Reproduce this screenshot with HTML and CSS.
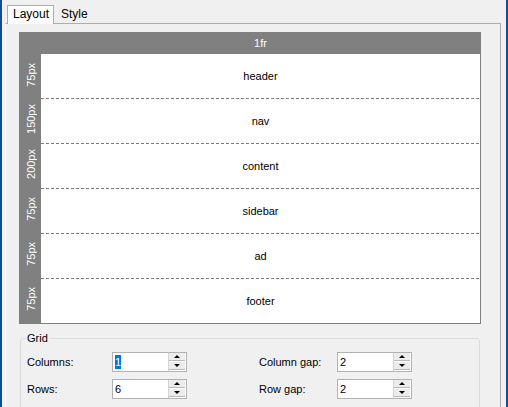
FILE: index.html
```html
<!DOCTYPE html>
<html lang="en">
<head>
    <meta charset="UTF-8">
    <title>Grid layout editor</title>
    <link rel="stylesheet" href="styles.css">
</head>
<body>
    <div class="window">
        <!-- tabs -->
        <div class="tabs">
            <div class="tab active">Layout</div>
            <div class="tab">Style</div>
        </div>
        <div class="page">
            <!-- grid preview -->
            <div class="preview">
                <div class="head"><span class="col">1fr</span></div>
                <div class="row"><div class="size"><span>75px</span></div><div class="cell">header</div></div>
                <div class="row"><div class="size"><span>150px</span></div><div class="cell">nav</div></div>
                <div class="row"><div class="size"><span>200px</span></div><div class="cell">content</div></div>
                <div class="row"><div class="size"><span>75px</span></div><div class="cell">sidebar</div></div>
                <div class="row"><div class="size"><span>75px</span></div><div class="cell">ad</div></div>
                <div class="row"><div class="size"><span>75px</span></div><div class="cell">footer</div></div>
            </div>
            <!-- grid settings -->
            <fieldset class="group">
                <legend>Grid</legend>
                <div class="fields">
                    <label>Columns:</label>
                    <div class="spin"><div class="val"><span class="sel">1</span></div><div class="arrows"><div class="btn"><i class="up"></i></div><div class="btn"><i class="down"></i></div></div></div>
                    <label>Column gap:</label>
                    <div class="spin"><div class="val">2</div><div class="arrows"><div class="btn"><i class="up"></i></div><div class="btn"><i class="down"></i></div></div></div>
                    <label>Rows:</label>
                    <div class="spin"><div class="val">6</div><div class="arrows"><div class="btn"><i class="up"></i></div><div class="btn"><i class="down"></i></div></div></div>
                    <label>Row gap:</label>
                    <div class="spin"><div class="val">2</div><div class="arrows"><div class="btn"><i class="up"></i></div><div class="btn"><i class="down"></i></div></div></div>
                </div>
            </fieldset>
        </div>
    </div>
</body>
</html>
```

FILE: styles.css
```css
html, body {
    margin: 0;
    height: 100%;
    overflow: hidden;
}
body {
    background: #f0f0f0;
    font-family: "Liberation Sans", Arial, sans-serif;
    font-size: 11px;
    color: #000;
}
.window {
    height: 407px;
    box-sizing: border-box;
    border-left: 2px solid #124e8c;
    border-right: 2px solid #124e8c;
    padding: 5px 5px 0 3px;
    overflow: hidden;
}
.tabs {
    display: flex;
    height: 18px;
    padding-left: 2px;
}
.tab {
    font-size: 12px;
    line-height: 17px;
    height: 18px;
    padding: 0 4px 0 5px;
    border: 1px solid transparent;
    border-bottom: none;
}
.tab + .tab {
    margin-left: 1px;
}
.tab.active {
    position: relative;
    z-index: 1;
    background: #fff;
    border-color: #adadad;
}
.page {
    height: 420px;
    border: 1px solid #adadad;
    border-left-color: #fdfdfd;
    padding: 8px 0 0 13px;
}
.preview {
    width: 462px;
    box-sizing: border-box;
    background: #808080;
    padding: 0 1px 1px 0;
}
.head {
    display: flex;
    height: 22px;
    line-height: 22px;
    color: #fff;
}
.head .col {
    flex: 1;
    margin-left: 22px;
    text-align: center;
}
.row {
    display: flex;
    height: 44px;
}
.row + .row {
    height: 45px;
}
.size {
    width: 22px;
    color: #fff;
    display: flex;
    align-items: center;
    justify-content: center;
    padding-left: 2px;
    box-sizing: border-box;
}
.size span {
    writing-mode: vertical-rl;
    transform: rotate(180deg);
    margin-bottom: 3px;
}
.cell {
    flex: 1;
    background: #fff;
    display: flex;
    align-items: center;
    justify-content: center;
}
.row + .row .cell {
    box-sizing: border-box;
    padding-top: 1px;
    background: repeating-linear-gradient(to right, #7a7a7a 0 3px, transparent 3px 5px) top / 100% 1px no-repeat, #fff;
}
.group {
    width: 460px;
    box-sizing: border-box;
    margin: 7px 0 0 1px;
    border: 1px solid #dcdcdc;
    border-radius: 3px;
    padding: 7px 0 20px 6px;
}
.group legend {
    line-height: 14px;
    padding: 0 2px 0 1px;
    margin-left: -1px;
}
.fields {
    display: grid;
    grid-template-columns: 85px 147px 78px 75px;
    grid-auto-rows: 20px;
    row-gap: 7px;
    align-items: center;
}
.spin {
    display: flex;
    width: 75px;
    height: 20px;
    box-sizing: border-box;
    border: 1px solid #b2b2b2;
    background: #fff;
}
.spin .val {
    flex: 1;
    display: flex;
    align-items: center;
    padding-left: 2px;
}
.sel {
    background: #0078d7;
    color: #fff;
    line-height: 14px;
}
.arrows {
    width: 16px;
    display: flex;
    flex-direction: column;
    border-left: 1px solid #d4d4d4;
    padding: 0 1px 1px 0;
}
.btn {
    flex: 1;
    display: flex;
    align-items: center;
    justify-content: center;
    background: #ececec;
    border-bottom: 1px solid #b9b9b9;
}
.btn + .btn {
    border-top: 1px solid #fff;
}
.up, .down {
    width: 0;
    height: 0;
    border-left: 3px solid transparent;
    border-right: 3px solid transparent;
}
.up {
    border-bottom: 3px solid #000;
}
.down {
    border-top: 3px solid #000;
}
```
